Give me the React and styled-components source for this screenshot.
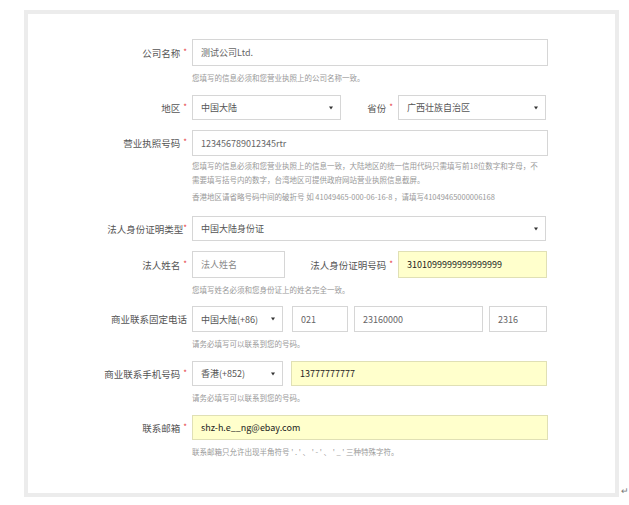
import styled, { createGlobalStyle } from "styled-components"

const GlobalStyle = createGlobalStyle`
  html, body {
    margin: 0;
    padding: 0;
    background: #fff;
  }
  body {
    font-family: "Noto Sans CJK SC", "Noto Sans", sans-serif;
  }
`

const Arrow = () => (
  <svg width="4" height="4" viewBox="0 0 4 4">
    <path d="M0 0.5 L4 0.5 L2 3.5 Z" fill="#333" />
  </svg>
)

const App = () => {
  return (
    <>
      <GlobalStyle />
      <Page>
        <Frame>
          <Field $after={11}>
            <Row $h={27}>
              <Label>公司名称<Star>*</Star></Label>
              <Box $w={356}>测试公司Ltd.</Box>
            </Row>
            <Hint>您填写的信息必须和您营业执照上的公司名称一致。</Hint>
          </Field>

          <Field $after={10}>
            <Row $h={25}>
              <Label>地区<Star>*</Star></Label>
              <Select $w={149}><span>中国大陆</span><Arrow /></Select>
              <InnerLabel $w={57}>省份<Star>*</Star></InnerLabel>
              <Select $w={148}><span>广西壮族自治区</span><Arrow /></Select>
            </Row>
          </Field>

          <Field $after={12}>
            <Row $h={26}>
              <Label>营业执照号码<Star>*</Star></Label>
              <Box $w={356}>123456789012345rtr</Box>
            </Row>
            <Hint $lh={14} $top={3}>
              您填写的信息必须和您营业执照上的信息一致，大陆地区的统一信用代码只需填写前18位数字和字母，不
              <br />
              需要填写括号内的数字，台湾地区可提供政府网站营业执照信息截屏。
            </Hint>
            <Hint $lh={14} $top={3}>
              香港地区请省略号码中间的破折号 如 41049465-000-06-16-8 ，请填写41049465000006168
            </Hint>
          </Field>

          <Field $after={10}>
            <Row $h={25}>
              <Label>法人身份证明类型<Star $tight>*</Star></Label>
              <Select $w={354}><span>中国大陆身份证</span><Arrow /></Select>
            </Row>
          </Field>

          <Field $after={10}>
            <Row $h={27}>
              <Label>法人姓名<Star>*</Star></Label>
              <Box $w={93} $muted>法人姓名</Box>
              <InnerLabel $w={113}>法人身份证明号码<Star>*</Star></InnerLabel>
              <Box $w={149} $yellow>3101099999999999999</Box>
            </Row>
            <Hint>您填写姓名必须和您身份证上的姓名完全一致。</Hint>
          </Field>

          <Field $after={11}>
            <Row $h={26}>
              <Label>商业联系固定电话</Label>
              <Select $w={91}><span>中国大陆(+86)</span><Arrow /></Select>
              <Box $w={56} $gap={9}>021</Box>
              <Box $w={129} $gap={6}>23160000</Box>
              <Box $w={58} $gap={6}>2316</Box>
            </Row>
            <Hint>请务必填写可以联系到您的号码。</Hint>
          </Field>

          <Field $after={11}>
            <Row $h={25}>
              <Label>商业联系手机号码<Star>*</Star></Label>
              <Select $w={91}><span>香港(+852)</span><Arrow /></Select>
              <Box $w={256} $gap={8} $yellow>13777777777</Box>
            </Row>
            <Hint>请务必填写可以联系到您的号码。</Hint>
          </Field>

          <Field $after={0}>
            <Row $h={25}>
              <Label>联系邮箱<Star>*</Star></Label>
              <Box $w={356} $yellow>shz-h.e__ng@ebay.com</Box>
            </Row>
            <Hint>联系邮箱只允许出现半角符号 ' . ' 、 ' - ' 、 ' _ ' 三种特殊字符。</Hint>
          </Field>
        </Frame>
        <Return>↵</Return>
      </Page>
    </>
  )
}

export default App

const Page = styled.div`
  display: flex;
  align-items: flex-end;
  padding: 10px 0 0 24px;
`

const Frame = styled.div`
  width: 596px;
  height: 487px;
  box-sizing: border-box;
  border: 4px solid #ececec;
  background: #fff;
  padding-top: 25px;
`

const Return = styled.span`
  font-size: 9px;
  line-height: 10px;
  color: #777;
  margin-left: 2px;
  margin-bottom: 1px;
`

const Field = styled.div`
  margin-bottom: ${(p) => p.$after}px;
`

const Row = styled.div`
  display: flex;
  align-items: center;
  height: ${(p) => p.$h}px;
`

const Label = styled.div`
  width: 164px;
  box-sizing: border-box;
  padding-right: 5px;
  text-align: right;
  white-space: nowrap;
  font-size: 9.5px;
  color: #555;
`

const InnerLabel = styled(Label)`
  width: ${(p) => p.$w}px;
`

const Star = styled.span`
  color: #e4393c;
  font-size: 8px;
  margin-left: ${(p) => (p.$tight ? 0 : 3)}px;
  vertical-align: top;
`

const Box = styled.div`
  width: ${(p) => p.$w}px;
  height: 100%;
  margin-left: ${(p) => p.$gap || 0}px;
  box-sizing: border-box;
  display: flex;
  align-items: center;
  padding: 0 8px;
  border: 1px solid ${(p) => (p.$yellow ? "#e0e0b5" : "#d6d6d6")};
  background: ${(p) => (p.$yellow ? "#ffffcc" : "#fff")};
  font-size: 9px;
  white-space: nowrap;
  overflow: hidden;
  color: ${(p) => (p.$yellow ? "#222" : p.$muted ? "#888" : "#666")};
`

const Select = styled(Box)`
  justify-content: space-between;
  padding-right: 7px;
  color: #555;
`

const Hint = styled.p`
  margin: ${(p) => p.$top ?? 6}px 0 0 164px;
  font-size: 7.5px;
  line-height: ${(p) => p.$lh || 12}px;
  color: #999;
`
